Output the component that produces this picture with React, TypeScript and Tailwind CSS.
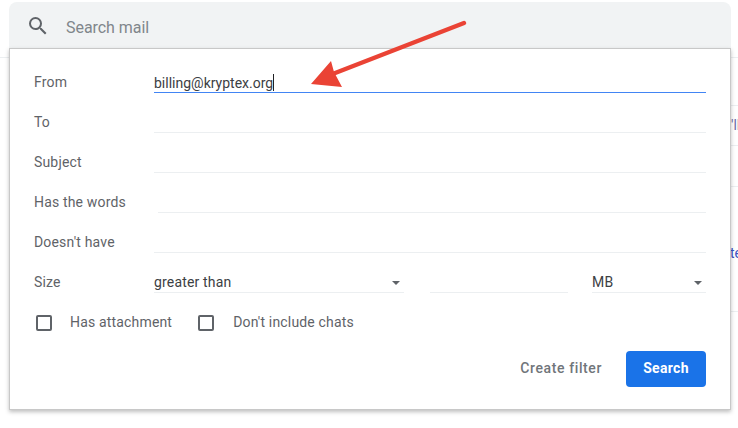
const font = { fontFamily: "Roboto, sans-serif" };

function Caret() {
  return (
    <svg width="8" height="4" viewBox="0 0 8 4" className="shrink-0">
      <path d="M0 0h8L4 4z" fill="#5f6368" />
    </svg>
  );
}

function Row({ label, value, focused, inputClass = "ml-[120px]" }: { label: string; value?: string; focused?: boolean; inputClass?: string }) {
  return (
    <div className="flex h-10 items-stretch">
      <div className="w-0 whitespace-nowrap pt-[19px] text-[14px] leading-[20px] tracking-[0.17px] text-[#5f6368]">{label}</div>
      <div className={`${inputClass} flex h-10 flex-1 items-end border-b ${focused ? "border-[#4285f4]" : "border-[#eceff1]"}`}>
        {value && (
          <span className="flex h-[19px] items-center text-[14px] leading-[20px] text-[#3c4043]">
            {value}
            <span className="ml-0 h-[17px] w-px bg-[#202124]" />
          </span>
        )}
      </div>
    </div>
  );
}

function Check({ label, labelClass }: { label: string; labelClass: string }) {
  return (
    <div className="flex items-center">
      <span className="h-4 w-4 rounded-[2px] border-2 border-[#5f6368]" />
      <span className={`${labelClass} -translate-y-px text-[14px] leading-[20px] tracking-[0.17px] text-[#5f6368]`}>{label}</span>
    </div>
  );
}

export default function App() {
  return (
    <div className="relative h-[428px] w-[738px] overflow-hidden bg-white" style={font}>
      <div className="absolute left-0 top-[57px] h-px w-full bg-[#eceff1]" />
      <div className="absolute right-0 top-[105px] h-px w-[10px] bg-[#eceff1]" />
      <div className="absolute right-0 top-[145px] h-px w-[10px] bg-[#eceff1]" />
      <div className="absolute right-0 top-[186px] h-px w-[10px] bg-[#eceff1]" />
      <div className="absolute right-0 top-[311px] h-px w-[10px] bg-[#eceff1]" />
      <span className="absolute left-[731px] top-[117px] text-[14px] leading-[16px] text-[#6b6ba8]">'ll</span>
      <span className="absolute left-[730px] top-[245px] text-[14px] leading-[16px] text-[#3a55c4]">te</span>

      <div className="relative pl-[9px] pr-[7px] pt-[2px]">
        <div className="flex h-[46px] items-center rounded-t-[8px] bg-[#f1f3f4]">
          <svg width="24" height="24" viewBox="0 0 24 24" className="ml-[17px] mt-[2px]" fill="#5f6368">
            <path d="M15.5 14h-.79l-.28-.27A6.471 6.471 0 0 0 16 9.5 6.5 6.5 0 1 0 9.5 16c1.61 0 3.09-.59 4.23-1.57l.27.28v.79l5 4.99L20.49 19l-4.99-5zm-6 0C7.01 14 5 11.99 5 9.5S7.01 5 9.5 5 14 7.01 14 9.5 11.99 14 9.5 14z" />
          </svg>
          <span className="ml-[16px] mt-[5px] text-[16px] leading-[24px] tracking-[-0.05px] text-[#80868b]">Search mail</span>
        </div>
        <div className="h-[362px] border border-[#c8c8c8] bg-white pl-[24px] pr-[24px] pt-[4px] shadow-[0_2px_4px_rgba(0,0,0,0.25)]">
          <Row label="From" value="billing@kryptex.org" focused />
          <Row label="To" />
          <Row label="Subject" />
          <Row label="Has the words" inputClass="ml-[124px]" />
          <Row label="Doesn't have" />
          <div className="flex h-10">
            <div className="w-[120px] pt-[19px] text-[14px] leading-[20px] tracking-[0.17px] text-[#5f6368]">Size</div>
            <div className="flex w-[250px] items-center justify-between border-b border-[#eceff1] pr-[4px] text-[14px] tracking-[0.17px] text-[#3c4043]">
              <span className="pt-[18px] leading-[20px]">greater than</span>
              <span className="pt-[21px]"><Caret /></span>
            </div>
            <div className="ml-[26px] w-[138px] border-b border-[#eceff1]" />
            <div className="ml-[24px] flex flex-1 items-center justify-between border-b border-[#eceff1] pr-[4px] text-[14px] tracking-[0.17px] text-[#3c4043]">
              <span className="pt-[18px] leading-[20px]">MB</span>
              <span className="pt-[21px]"><Caret /></span>
            </div>
          </div>
          <div className="ml-[2px] mt-[10px] flex h-[40px] items-center gap-[26px]">
            <Check label="Has attachment" labelClass="ml-[18px]" />
            <Check label="Don't include chats" labelClass="ml-[19px]" />
          </div>
          <div className="mt-[8px] flex items-center justify-end">
            <span className="-translate-y-px text-[14px] font-medium leading-[20px] tracking-[0.6px] text-[#70757a]">Create filter</span>
            <button className="ml-[24px] h-9 w-20 rounded-[4px] bg-[#1a73e8] pb-[2px] text-[14px] font-bold tracking-[0.3px] text-white">Search</button>
          </div>
        </div>
      </div>

      <svg className="pointer-events-none absolute left-0 top-0" width="738" height="428" viewBox="0 0 738 428">
        <line x1="464" y1="23" x2="330" y2="75" stroke="#ea4335" strokeWidth="4.5" strokeLinecap="round" />
        <path d="M311 84L331 61L334 72L342 87z" fill="#ea4335" />
      </svg>
    </div>
  );
}
